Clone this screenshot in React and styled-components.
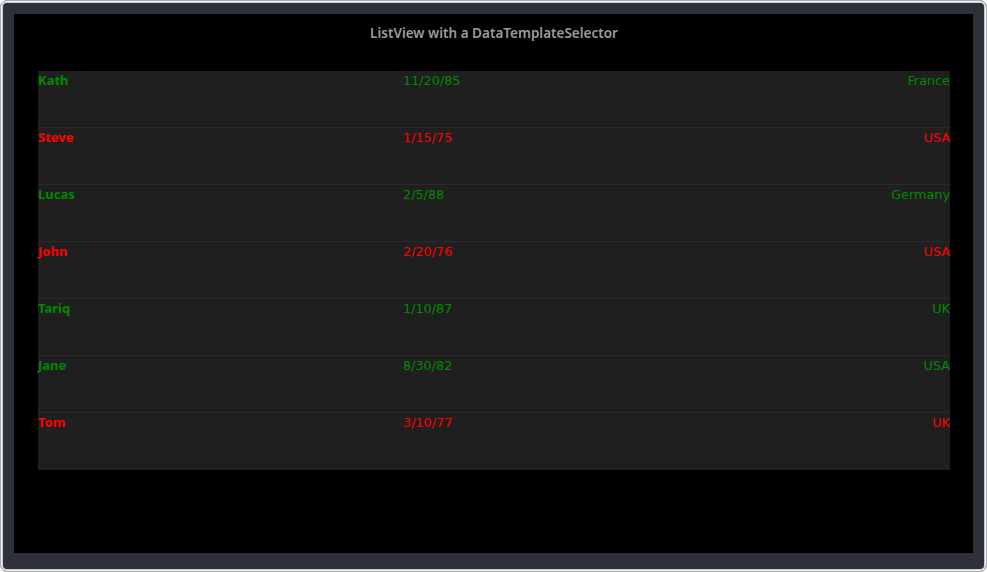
import React from 'react'
import styled, { createGlobalStyle } from 'styled-components'

const people = [
    { name: 'Kath', born: '11/20/85', country: 'France', ok: true },
    { name: 'Steve', born: '1/15/75', country: 'USA', ok: false },
    { name: 'Lucas', born: '2/5/88', country: 'Germany', ok: true },
    { name: 'John', born: '2/20/76', country: 'USA', ok: false },
    { name: 'Tariq', born: '1/10/87', country: 'UK', ok: true },
    { name: 'Jane', born: '8/30/82', country: 'USA', ok: true },
    { name: 'Tom', born: '3/10/77', country: 'UK', ok: false },
]

const GlobalStyle = createGlobalStyle`
    html, body {
        margin: 0;
        padding: 0;
        background: #ffffff;
    }
    body {
        font-family: "Noto Sans", "DejaVu Sans", sans-serif;
    }
`

const App = () => {
    return (
        <>
            <GlobalStyle />
            <Frame>
                <Screen>
                    <Title>ListView with a DataTemplateSelector</Title>
                    <List>
                        {people.map((p, index) =>
                            <Row key={index} tone={p.ok ? '#008a00' : '#ff0000'}>
                                <Name>{p.name}</Name>
                                <Cell>{p.born}</Cell>
                                <Country>{p.country}</Country>
                            </Row>
                        )}
                    </List>
                </Screen>
            </Frame>
        </>
    )
}

export default App


const Frame = styled.div`
    width: 987px;
    height: 572px;
    box-sizing: border-box;
    border: 1px solid #a9abb0;
    border-radius: 7px;
    box-shadow: inset 0 0 0 1px #f4f4f4, inset 0 0 0 2px #c9cbcf;
    background: #2e313a;
    padding: 13px 13px 18px 13px;
    display: flex;
`

const Screen = styled.div`
    flex: 1;
    background: #000000;
    display: flex;
    flex-direction: column;
    padding: 0 23px 0 24px;
`

const Title = styled.div`
    color: #9b9b9b;
    font-weight: 600;
    font-size: 13.5px;
    line-height: 18px;
    text-align: center;
    padding-top: 10px;
    margin-bottom: 29px;
`

const List = styled.div`
    display: flex;
    flex-direction: column;
    background: #1f1f1f;
`

const Row = styled.div`
    display: grid;
    grid-template-columns: 365px 1fr auto;
    align-items: baseline;
    height: 56px;
    border-bottom: 1px solid #2a2a2a;
    color: ${props => props.tone};
    font-family: "DejaVu Sans", sans-serif;
    font-size: 12.8px;
    line-height: 18px;

    &:last-child {
        border-bottom: none;
        height: 57px;
    }
`

const Name = styled.div`
    font-family: "Noto Sans", sans-serif;
    font-size: 13px;
    font-weight: 700;
`

const Cell = styled.div``

const Country = styled.div`
    text-align: right;
`
